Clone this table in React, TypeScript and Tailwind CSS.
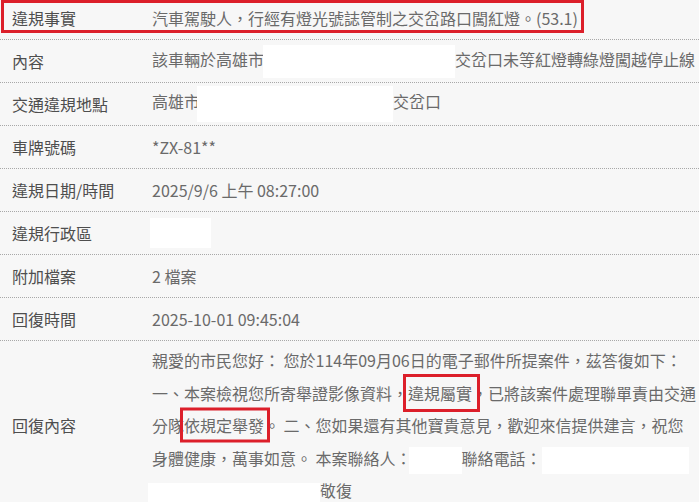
import React from "react";

const rowCls =
  "relative flex h-[43px] items-center border-b border-dotted border-[#a8a8a8]";

function Label({ children }: { children: React.ReactNode }) {
  return <div className="w-[152px] shrink-0 pl-3 text-[#4e4e4e]">{children}</div>;
}

function Value({ children }: { children: React.ReactNode }) {
  return <div className="whitespace-nowrap text-[#6a6a6a]">{children}</div>;
}

export default function App() {
  return (
    <div className="w-[699px] h-[502px] overflow-hidden bg-[#f7f7f7] font-['Noto_Sans_CJK_TC','Noto_Sans',sans-serif] text-[16px]">
      <div className="-mt-[3px]">
        <div className={rowCls}>
          <Label>違規事實</Label>
          <Value>汽車駕駛人，行經有燈光號誌管制之交岔路口闖紅燈。(53.1)</Value>
          <div className="pointer-events-none absolute left-[1px] top-[3px] h-[33px] w-[583px] border-[3px] border-[#dc1f2a]" />
        </div>
        <div className={rowCls}>
          <Label>內容</Label>
          <Value>
            該車輛於高雄市
            <span className="-ml-[1px] inline-block h-[33px] w-[192px] bg-white align-middle" />
            交岔口未等紅燈轉綠燈闖越停止線
          </Value>
        </div>
        <div className={rowCls}>
          <Label>交通違規地點</Label>
          <Value>
            高雄市
            <span className="-ml-[3px] inline-block h-[36px] w-[196px] bg-white align-middle" />
            交岔口
          </Value>
        </div>
        <div className={rowCls}>
          <Label>車牌號碼</Label>
          <Value>*ZX-81**</Value>
        </div>
        <div className={rowCls}>
          <Label>違規日期/時間</Label>
          <Value>2025/9/6 上午 08:27:00</Value>
        </div>
        <div className={rowCls}>
          <Label>違規行政區</Label>
          <Value>
            <span className="-ml-[2px] inline-block h-[30px] w-[61px] bg-white align-middle" />
          </Value>
        </div>
        <div className={rowCls}>
          <Label>附加檔案</Label>
          <Value>2 檔案</Value>
        </div>
        <div className={rowCls}>
          <Label>回復時間</Label>
          <Value>2025-10-01 09:45:04</Value>
        </div>
        <div className="relative flex items-center">
          <Label>回復內容</Label>
          <div className="whitespace-nowrap py-[3px] leading-[32.5px] text-[#6a6a6a]">
            親愛的市民您好： 您於114年09月06日的電子郵件所提案件，茲答復如下：
            <br />
            一、本案檢視您所寄舉證影像資料，
            <span className="relative">
              違規屬實
              <span className="pointer-events-none absolute left-[-5px] right-[-8px] top-1/2 h-[38px] -translate-y-1/2 border-[3px] border-[#dc1f2a]" />
            </span>
            ，已將該案件處理聯單責由交通
            <br />
            分隊
            <span className="relative">
              依規定舉發
              <span className="pointer-events-none absolute left-[-4px] right-[-6px] top-1/2 h-[35px] -translate-y-1/2 border-[3px] border-[#dc1f2a]" />
            </span>
            。 二、您如果還有其他寶貴意見，歡迎來信提供建言，祝您
            <br />
            身體健康，萬事如意。 本案聯絡人：
            <span className="-ml-[3px] inline-block h-[27px] w-[53px] bg-white align-middle" />
            聯絡電話：
            <span className="inline-block h-[27px] w-[147px] bg-white align-middle" />
            <br />
            <span className="-ml-[4px] inline-block h-[20px] w-[172px] bg-white align-middle" />
            敬復
          </div>
        </div>
      </div>
    </div>
  );
}
